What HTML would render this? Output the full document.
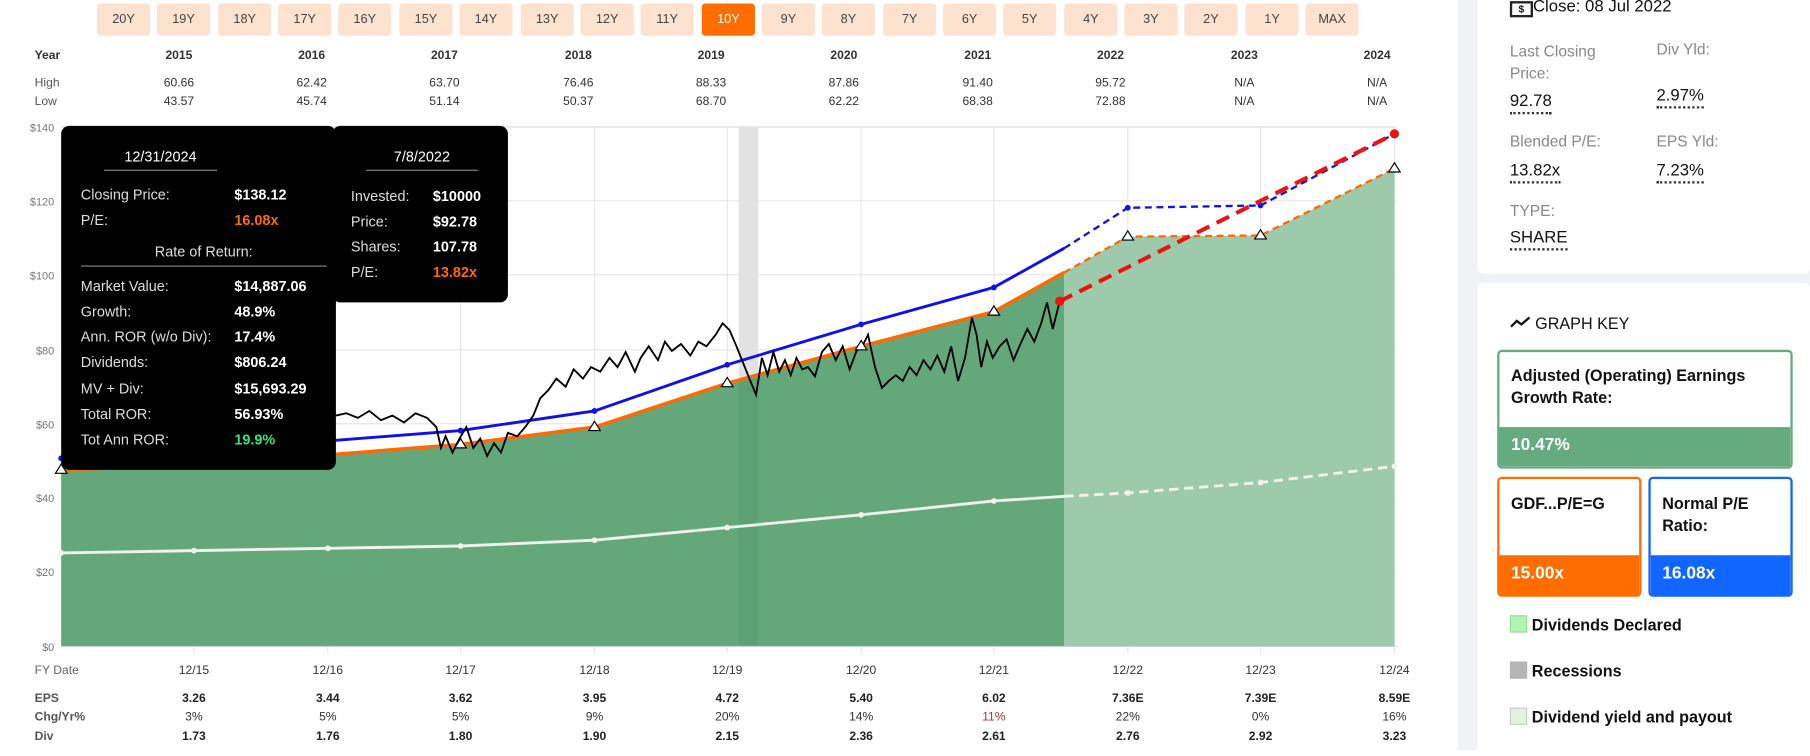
<!DOCTYPE html>
<html><head><meta charset="utf-8"><style>
*{margin:0;padding:0;box-sizing:border-box}
html,body{width:1810px;height:750px;overflow:hidden;background:#fff;font-family:"Liberation Sans",Arial,sans-serif}
#w{position:absolute;left:0;top:0;width:1568px;height:650px;transform:scale(1.15434);transform-origin:0 0}
.a{position:absolute;white-space:nowrap}
.btn{position:absolute;top:3px;width:46px;height:28px;background:#fde2d0;border-radius:3px;font-size:11px;color:#444;text-align:center;line-height:28px}
.btn.on{background:#ff6d00;color:#fff}
.c{transform:translateX(-50%);text-align:center}
.tb{font-size:10.5px;color:#333}
.tip{position:absolute;background:#000;border-radius:7px;color:#fff}
.tl{position:absolute;font-size:12.5px;color:#ddd}
.tv{position:absolute;font-size:12.5px;font-weight:bold;color:#fff}
.rp{font-size:13.5px;color:#888}
.rv{font-size:14.5px;color:#111;border-bottom:2px dotted #333;padding-bottom:1px}
.kb{position:absolute;border:2px solid;border-radius:4px;background:#fff;overflow:hidden}
.kb .t{padding:11px 0 0 10px;font-size:14px;font-weight:bold;color:#111;line-height:19px}
.kb .f{position:absolute;left:0;right:0;bottom:0;color:#fff;font-weight:bold;font-size:15px;padding-left:10px}
.lg{position:absolute;left:1308px;font-size:14px;font-weight:bold;color:#111}
.lg i{display:inline-block;width:15px;height:15px;vertical-align:-2px;margin-right:4px}
</style></head><body><div id="w">

<div class="btn" style="left:84px">20Y</div><div class="btn" style="left:136px">19Y</div><div class="btn" style="left:189px">18Y</div><div class="btn" style="left:241px">17Y</div><div class="btn" style="left:293px">16Y</div><div class="btn" style="left:346px">15Y</div><div class="btn" style="left:398px">14Y</div><div class="btn" style="left:451px">13Y</div><div class="btn" style="left:503px">12Y</div><div class="btn" style="left:555px">11Y</div><div class="btn on" style="left:608px">10Y</div><div class="btn" style="left:660px">9Y</div><div class="btn" style="left:712px">8Y</div><div class="btn" style="left:765px">7Y</div><div class="btn" style="left:817px">6Y</div><div class="btn" style="left:869px">5Y</div><div class="btn" style="left:922px">4Y</div><div class="btn" style="left:974px">3Y</div><div class="btn" style="left:1026px">2Y</div><div class="btn" style="left:1079px">1Y</div><div class="btn" style="left:1131px">MAX</div>

<div class="a tb" style="left:30px;top:42px;font-weight:bold">Year</div>
<div class="a tb" style="left:30px;top:66px;color:#555">High</div>
<div class="a tb" style="left:30px;top:82px;color:#555">Low</div>
<div class="a tb c" style="left:155px;top:42px;font-weight:bold">2015</div><div class="a tb c" style="left:155px;top:66px">60.66</div><div class="a tb c" style="left:155px;top:82px">43.57</div>
<div class="a tb c" style="left:270px;top:42px;font-weight:bold">2016</div><div class="a tb c" style="left:270px;top:66px">62.42</div><div class="a tb c" style="left:270px;top:82px">45.74</div>
<div class="a tb c" style="left:385px;top:42px;font-weight:bold">2017</div><div class="a tb c" style="left:385px;top:66px">63.70</div><div class="a tb c" style="left:385px;top:82px">51.14</div>
<div class="a tb c" style="left:501px;top:42px;font-weight:bold">2018</div><div class="a tb c" style="left:501px;top:66px">76.46</div><div class="a tb c" style="left:501px;top:82px">50.37</div>
<div class="a tb c" style="left:616px;top:42px;font-weight:bold">2019</div><div class="a tb c" style="left:616px;top:66px">88.33</div><div class="a tb c" style="left:616px;top:82px">68.70</div>
<div class="a tb c" style="left:731px;top:42px;font-weight:bold">2020</div><div class="a tb c" style="left:731px;top:66px">87.86</div><div class="a tb c" style="left:731px;top:82px">62.22</div>
<div class="a tb c" style="left:847px;top:42px;font-weight:bold">2021</div><div class="a tb c" style="left:847px;top:66px">91.40</div><div class="a tb c" style="left:847px;top:82px">68.38</div>
<div class="a tb c" style="left:962px;top:42px;font-weight:bold">2022</div><div class="a tb c" style="left:962px;top:66px">95.72</div><div class="a tb c" style="left:962px;top:82px">72.88</div>
<div class="a tb c" style="left:1078px;top:42px;font-weight:bold">2023</div><div class="a tb c" style="left:1078px;top:66px">N/A</div><div class="a tb c" style="left:1078px;top:82px">N/A</div>
<div class="a tb c" style="left:1193px;top:42px;font-weight:bold">2024</div><div class="a tb c" style="left:1193px;top:66px">N/A</div><div class="a tb c" style="left:1193px;top:82px">N/A</div>

<svg class="a" style="left:0;top:0" width="1260" height="650" viewBox="0 0 1260 650">
<g font-family="Liberation Sans, sans-serif" font-size="9.5" fill="#777" text-anchor="end">
<text x="47" y="114">$140</text><text x="47" y="178">$120</text><text x="47" y="242">$100</text><text x="47" y="307">$80</text><text x="47" y="371">$60</text><text x="47" y="435">$40</text><text x="47" y="499">$20</text><text x="47" y="564">$0</text>
</g>
<g stroke="#e6e6e6" stroke-width="1">
<line x1="53" y1="110" x2="1210" y2="110" stroke="#d6dbe6"/><line x1="53" y1="174" x2="1210" y2="174"/><line x1="53" y1="238" x2="1210" y2="238"/><line x1="53" y1="303" x2="1210" y2="303"/><line x1="53" y1="367" x2="1210" y2="367"/><line x1="53" y1="431" x2="1210" y2="431"/><line x1="53" y1="495" x2="1210" y2="495"/>
<line x1="168" y1="110" x2="168" y2="566"/><line x1="284" y1="110" x2="284" y2="566"/><line x1="399" y1="110" x2="399" y2="566"/><line x1="515" y1="110" x2="515" y2="566"/><line x1="630" y1="110" x2="630" y2="566"/><line x1="746" y1="110" x2="746" y2="566"/><line x1="861" y1="110" x2="861" y2="566"/><line x1="977" y1="110" x2="977" y2="566"/><line x1="1092" y1="110" x2="1092" y2="566"/><line x1="1208" y1="110" x2="1208" y2="566"/>
</g>
<rect x="640" y="110" width="17" height="450" fill="#e2e2e2"/>
<polygon points="53,407 168,403 284,394 399,385 515,370 630,332 746,300 861,270 922,236 922,560 53,560" fill="#63a77b"/>
<rect x="640" y="328" width="17" height="232" fill="#3f8a5a" opacity="0.18"/>
<polygon points="922,236 977,205 1092,204 1208,146 1208,560 922,560" fill="#9ccaaa"/>
<line x1="53" y1="560" x2="1210" y2="560" stroke="#c8d0e0"/>
<polyline points="53,479 168,477 284,475 399,473 515,468 630,457 746,446 861,434 922,430" fill="none" stroke="#f2f2ea" stroke-width="2.5"/>
<polyline points="922,430 977,427 1092,418 1208,404" fill="none" stroke="#f2f2ea" stroke-width="2.5" stroke-dasharray="8,5"/>
<g fill="#f2f2ea"><circle cx="53" cy="479" r="2.5"/><circle cx="168" cy="477" r="2.5"/><circle cx="284" cy="475" r="2.5"/><circle cx="399" cy="473" r="2.5"/><circle cx="515" cy="468" r="2.5"/><circle cx="630" cy="457" r="2.5"/><circle cx="746" cy="446" r="2.5"/><circle cx="861" cy="434" r="2.5"/><circle cx="977" cy="427" r="2.5"/><circle cx="1092" cy="418" r="2.5"/><circle cx="1208" cy="404" r="2.5"/></g>
<polyline points="53,407 168,403 284,394 399,385 515,370 630,332 746,300 861,270 922,236" fill="none" stroke="#ff6a00" stroke-width="3"/>
<polyline points="922,236 977,205 1092,204 1208,146" fill="none" stroke="#ff6a00" stroke-width="2" stroke-dasharray="6,4"/>
<polyline points="53,397 168,391 284,382 399,373 515,356 630,316 746,281 861,249 922,215" fill="none" stroke="#1010e8" stroke-width="2.5"/>
<polyline points="922,215 977,180 1092,178 1208,116" fill="none" stroke="#1010e8" stroke-width="2" stroke-dasharray="6,4"/>
<g fill="#1010e8"><circle cx="53" cy="397" r="2.5"/><circle cx="399" cy="373" r="2.5"/><circle cx="515" cy="356" r="2.5"/><circle cx="630" cy="316" r="2.5"/><circle cx="746" cy="281" r="2.5"/><circle cx="861" cy="249" r="2.5"/><circle cx="977" cy="180" r="2.5"/><circle cx="1092" cy="178" r="2.5"/></g>
<polyline points="53,398 70,392 90,388 110,400 130,395 150,405 168,398 190,392 210,380 230,372 250,368 270,364 291,360 300,358 310,362 320,356 330,364 340,360 350,366 360,358 370,362 378,370 382,388 386,378 392,392 398,380 404,370 410,388 416,380 422,395 428,384 434,392 440,375 448,378 455,370 462,360 468,345 475,338 482,328 490,335 497,320 505,328 512,318 520,322 528,310 535,318 542,305 550,322 555,310 562,300 570,312 576,296 582,304 590,298 598,308 605,296 612,300 620,290 626,280 632,286 638,300 644,315 650,330 655,342 660,310 665,325 670,305 675,322 680,312 685,325 690,310 695,320 700,318 706,326 712,305 718,298 724,312 730,300 736,320 742,304 748,298 752,290 758,318 764,336 770,330 776,325 782,330 788,318 794,325 800,312 806,320 812,308 818,322 824,300 830,330 836,310 842,275 846,290 850,318 855,296 860,310 866,300 872,294 878,312 884,298 890,285 896,296 902,280 907,262 912,285 918,261" fill="none" stroke="#000" stroke-width="1.6"/>
<line x1="918" y1="261" x2="1208" y2="116" stroke="#ee1111" stroke-width="3.5" stroke-dasharray="12,7"/>
<circle cx="918" cy="261" r="4" fill="#ee1111"/><circle cx="1208" cy="116" r="4" fill="#ee1111"/>
<g fill="#fff" stroke="#000" stroke-width="1"><path d="M53,402 l-5,8 h10z"/><path d="M399,380 l-5,8 h10z"/><path d="M515,365 l-5,8 h10z"/><path d="M630,327 l-5,8 h10z"/><path d="M746,295 l-5,8 h10z"/><path d="M861,265 l-5,8 h10z"/><path d="M977,200 l-5,8 h10z"/><path d="M1092,199 l-5,8 h10z"/><path d="M1208,141 l-5,8 h10z"/></g>
<g font-family="Liberation Sans, sans-serif" font-size="10.5" fill="#333" text-anchor="middle">
<text x="30" y="584" text-anchor="start" fill="#666">FY Date</text>
<text x="168" y="584">12/15</text><text x="284" y="584">12/16</text><text x="399" y="584">12/17</text><text x="515" y="584">12/18</text><text x="630" y="584">12/19</text><text x="746" y="584">12/20</text><text x="861" y="584">12/21</text><text x="977" y="584">12/22</text><text x="1092" y="584">12/23</text><text x="1208" y="584">12/24</text>
<g font-weight="bold" fill="#222"><text x="30" y="608" text-anchor="start" fill="#555">EPS</text><text x="168" y="608">3.26</text><text x="284" y="608">3.44</text><text x="399" y="608">3.62</text><text x="515" y="608">3.95</text><text x="630" y="608">4.72</text><text x="746" y="608">5.40</text><text x="861" y="608">6.02</text><text x="977" y="608">7.36E</text><text x="1092" y="608">7.39E</text><text x="1208" y="608">8.59E</text></g>
<text x="30" y="624" text-anchor="start" fill="#555" font-weight="bold">Chg/Yr%</text><text x="168" y="624">3%</text><text x="284" y="624">5%</text><text x="399" y="624">5%</text><text x="515" y="624">9%</text><text x="630" y="624">20%</text><text x="746" y="624">14%</text><text x="861" y="624" fill="#a33">11%</text><text x="977" y="624">22%</text><text x="1092" y="624">0%</text><text x="1208" y="624">16%</text>
<g font-weight="bold" fill="#222"><text x="30" y="641" text-anchor="start" fill="#555">Div</text><text x="168" y="641">1.73</text><text x="284" y="641">1.76</text><text x="399" y="641">1.80</text><text x="515" y="641">1.90</text><text x="630" y="641">2.15</text><text x="746" y="641">2.36</text><text x="861" y="641">2.61</text><text x="977" y="641">2.76</text><text x="1092" y="641">2.92</text><text x="1208" y="641">3.23</text></g>
</g>
</svg>

<div class="tip" style="left:53px;top:109px;width:238px;height:298px"></div>
<div class="tip" style="left:288px;top:109px;width:152px;height:153px"></div>
<div class="a" style="left:90px;top:129px;width:98px;text-align:center;color:#fff;font-size:12.5px;border-bottom:1px solid #888;padding-bottom:4px">12/31/2024</div>
<div class="tl" style="left:70px;top:162px">Closing Price:</div><div class="tv" style="left:203px;top:162px">$138.12</div>
<div class="tl" style="left:70px;top:184px">P/E:</div><div class="tv" style="left:203px;top:184px;color:#ff6a00">16.08x</div>
<div class="a" style="left:70px;top:211px;width:213px;text-align:center;color:#ddd;font-size:12.5px;border-bottom:1px solid #888;padding-bottom:5px">Rate of Return:</div>
<div class="tl" style="left:70px;top:241px">Market Value:</div><div class="tv" style="left:203px;top:241px">$14,887.06</div>
<div class="tl" style="left:70px;top:263px">Growth:</div><div class="tv" style="left:203px;top:263px">48.9%</div>
<div class="tl" style="left:70px;top:285px">Ann. ROR (w/o Div):</div><div class="tv" style="left:203px;top:285px">17.4%</div>
<div class="tl" style="left:70px;top:307px">Dividends:</div><div class="tv" style="left:203px;top:307px">$806.24</div>
<div class="tl" style="left:70px;top:330px">MV + Div:</div><div class="tv" style="left:203px;top:330px">$15,693.29</div>
<div class="tl" style="left:70px;top:352px">Total ROR:</div><div class="tv" style="left:203px;top:352px">56.93%</div>
<div class="tl" style="left:70px;top:374px">Tot Ann ROR:</div><div class="tv" style="left:203px;top:374px;color:#2ee87a">19.9%</div>
<div class="a" style="left:317px;top:129px;width:97px;text-align:center;color:#fff;font-size:12.5px;border-bottom:1px solid #888;padding-bottom:4px">7/8/2022</div>
<div class="tl" style="left:304px;top:163px">Invested:</div><div class="tv" style="left:375px;top:163px">$10000</div>
<div class="tl" style="left:304px;top:185px">Price:</div><div class="tv" style="left:375px;top:185px">$92.78</div>
<div class="tl" style="left:304px;top:207px">Shares:</div><div class="tv" style="left:375px;top:207px">107.78</div>
<div class="tl" style="left:304px;top:229px">P/E:</div><div class="tv" style="left:375px;top:229px;color:#ff6a00">13.82x</div>

<div class="a" style="left:1263px;top:0;width:305px;height:650px;background:#f0f2f5"></div>
<div class="a" style="left:1280px;top:-5px;width:288px;height:242px;background:#fff;border-radius:5px"></div>
<div class="a" style="left:1280px;top:245px;width:288px;height:410px;background:#fff;border-radius:5px"></div>
<div class="a" style="left:1308px;top:-2px;font-size:14.5px;color:#111"><span style="display:inline-block;width:20px;height:14px;border:2px solid #222;font-size:9px;font-weight:bold;text-align:center;line-height:10px;vertical-align:-1px">$</span>Close: 08 Jul 2022</div>
<div class="a rp" style="left:1308px;top:35px;line-height:19px">Last Closing<br>Price:</div>
<div class="a rp" style="left:1435px;top:35px">Div Yld:</div>
<div class="a rv" style="left:1308px;top:80px">92.78</div>
<div class="a rv" style="left:1435px;top:75px">2.97%</div>
<div class="a rp" style="left:1308px;top:115px">Blended P/E:</div>
<div class="a rp" style="left:1435px;top:115px">EPS Yld:</div>
<div class="a rv" style="left:1308px;top:140px">13.82x</div>
<div class="a rv" style="left:1435px;top:140px">7.23%</div>
<div class="a rp" style="left:1308px;top:175px">TYPE:</div>
<div class="a rv" style="left:1308px;top:198px">SHARE</div>
<div class="a" style="left:1308px;top:272px;font-size:14px;color:#111"><svg width="18" height="12" viewBox="0 0 18 12" style="vertical-align:0"><path d="M1,10 L6,5 L10,8 L17,2" fill="none" stroke="#111" stroke-width="2"/></svg> GRAPH KEY</div>
<div class="kb" style="left:1297px;top:303px;width:256px;height:103px;border-color:#66aa80"><div class="t">Adjusted (Operating) Earnings<br>Growth Rate:</div><div class="f" style="background:#66aa80;height:34px;line-height:32px">10.47%</div></div>
<div class="kb" style="left:1297px;top:413px;width:125px;height:104px;border-color:#ff6d00"><div class="t" style="padding-top:12px">GDF...P/E=G</div><div class="f" style="background:#ff6d00;height:34px;line-height:32px">15.00x</div></div>
<div class="kb" style="left:1428px;top:413px;width:125px;height:104px;border-color:#1166ff"><div class="t" style="padding-top:12px">Normal P/E<br>Ratio:</div><div class="f" style="background:#1166ff;height:34px;line-height:32px">16.08x</div></div>
<div class="lg" style="top:533px"><i style="background:#aef5ae;border:1px solid #9d9"></i>Dividends Declared</div>
<div class="lg" style="top:573px"><i style="background:#b5b5b5"></i>Recessions</div>
<div class="lg" style="top:613px"><i style="background:#e3f1e3;border:1px solid #ccc"></i>Dividend yield and payout</div>
</div></body></html>
